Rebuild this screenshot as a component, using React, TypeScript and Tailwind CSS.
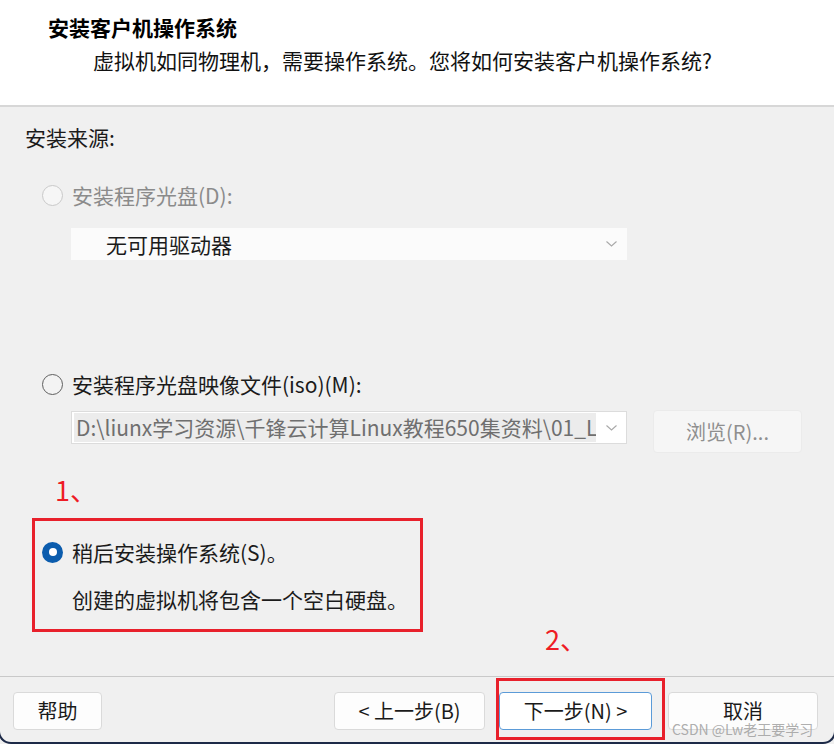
import React from "react";

const font = "font-['Noto_Sans_CJK_SC','Noto_Sans',sans-serif]";

const Radio = ({ state }: { state: "disabled" | "off" | "on" }) => {
  if (state === "on") {
    return (
      <span className="w-[21px] h-[21px] rounded-full bg-[#0b5cad] flex items-center justify-center shrink-0">
        <span className="w-[8px] h-[8px] rounded-full bg-white" />
      </span>
    );
  }
  if (state === "disabled") {
    return <span className="w-[21px] h-[21px] rounded-full border border-[#c9c9c9] bg-[#f6f6f6] shrink-0" />;
  }
  return <span className="w-[21px] h-[21px] rounded-full border-[1.5px] border-[#5f5f5f] bg-[#f3f3f3] shrink-0" />;
};

const Chevron = () => (
  <svg width="11" height="6" viewBox="0 0 11 6" className="shrink-0">
    <path d="M0.5 0.5 L5.5 5 L10.5 0.5" fill="none" stroke="#a8a8a8" strokeWidth="1.1" />
  </svg>
);

const Button = ({ label, width, primary }: { label: string; width: string; primary?: boolean }) => (
  <button
    className={`${width} h-[38px] rounded-[4px] text-[20px] leading-none text-[#1a1a1a] flex items-center justify-center ${
      primary ? "bg-white border border-[#5b9bd8]" : "bg-[#fdfdfd] border border-[#dadada]"
    }`}
  >
    {label}
  </button>
);

export default function App() {
  return (
    <div className={`relative w-[834px] h-[744px] overflow-hidden bg-[#f0f0f0] ${font}`}>
      {/* Header */}
      <div className="h-[107px] bg-white border-b-2 border-[#d7d7d7] pt-[12px]">
        <div className="ml-[48px] text-[21px] leading-[30px] font-bold text-black">安装客户机操作系统</div>
        <div className="ml-[93px] mt-[3px] text-[21px] leading-[30px] text-[#111]">
          虚拟机如同物理机，需要操作系统。您将如何安装客户机操作系统?
        </div>
      </div>

      {/* Body */}
      <div className="h-[569px] text-[21px] leading-[24px] text-[#1b1b1b]">
        <div className="pt-[18px] ml-[25px]">安装来源:</div>

        <div className="mt-[34px] ml-[42px] flex items-center gap-[9px] text-[#8b8b8b]">
          <Radio state="disabled" />
          <span>安装程序光盘(D):</span>
        </div>

        <div className="mt-[21px] ml-[71px] w-[556px] h-[32px] bg-[#fbfbfb] flex items-center pl-[35px] pr-[10px]">
          <span className="flex-1 text-[#1b1b1b]">无可用驱动器</span>
          <Chevron />
        </div>

        <div className="mt-[112px] ml-[42px] flex items-center gap-[9px]">
          <Radio state="off" />
          <span>安装程序光盘映像文件(iso)(M):</span>
        </div>

        <div className="mt-[15px] flex items-start">
          <div className="ml-[71px] w-[556px] h-[33px] bg-white border border-[#dcdcdc] flex items-center pl-[2px] pr-[9px]">
            <div className="w-[522px] h-[29px] bg-[#ececec] overflow-hidden whitespace-nowrap text-[#6f6f6f] leading-[29px] pl-[2px]">
              D:\liunx学习资源\千锋云计算Linux教程650集资料\01_L
            </div>
            <div className="flex-1 flex justify-end">
              <Chevron />
            </div>
          </div>
          <button className="ml-[26px] w-[149px] h-[43px] -mt-[1px] rounded-[4px] bg-[#f6f6f6] border border-[#ebebeb] text-[20px] text-[#8f8f8f] flex items-center justify-center">
            浏览(R)...
          </button>
        </div>

        <div className="mt-[22px] ml-[55px] text-[27px] leading-[30px] text-[#ee1c25]">1、</div>

        <div className="mt-[13px] ml-[32px] w-[391px] h-[114px] border-[3px] border-[#e8202b] pl-[7px] pt-[19px]">
          <div className="flex items-center gap-[9px]">
            <Radio state="on" />
            <span>稍后安装操作系统(S)。</span>
          </div>
          <div className="mt-[23px] ml-[30px]">创建的虚拟机将包含一个空白硬盘。</div>
        </div>
      </div>

      {/* Footer */}
      <div className="border-t border-[#c9c9c9] pt-[15px] flex items-start">
        <div className="ml-[13px]">
          <Button label="帮助" width="w-[89px]" />
        </div>
        <div className="ml-auto mr-[16px] flex">
          <Button label="< 上一步(B)" width="w-[151px]" />
          <div className="ml-[14px]">
            <Button label="下一步(N) >" width="w-[153px]" primary />
          </div>
          <div className="ml-[16px]">
            <Button label="取消" width="w-[150px]" />
          </div>
        </div>
      </div>

      {/* Annotations */}
      <div className="absolute left-[545px] top-[622px] text-[27px] leading-[34px] text-[#ee1c25]">2、</div>
      <div className="absolute left-[496px] top-[678px] w-[169px] h-[62px] border-[3px] border-[#e8202b] pointer-events-none" />
      <div className="absolute left-[672px] top-[720px] text-[14px] leading-[18px] text-[#9a9a9a]/80 whitespace-nowrap pointer-events-none">
        CSDN @Lw老王要学习
      </div>

      {/* Window frame bottom corners */}
      <div className="absolute -left-[2px] -right-[2px] bottom-0 h-[30px] border-2 border-t-0 border-[#1d2a48] rounded-b-[13px] pointer-events-none" />
    </div>
  );
}
